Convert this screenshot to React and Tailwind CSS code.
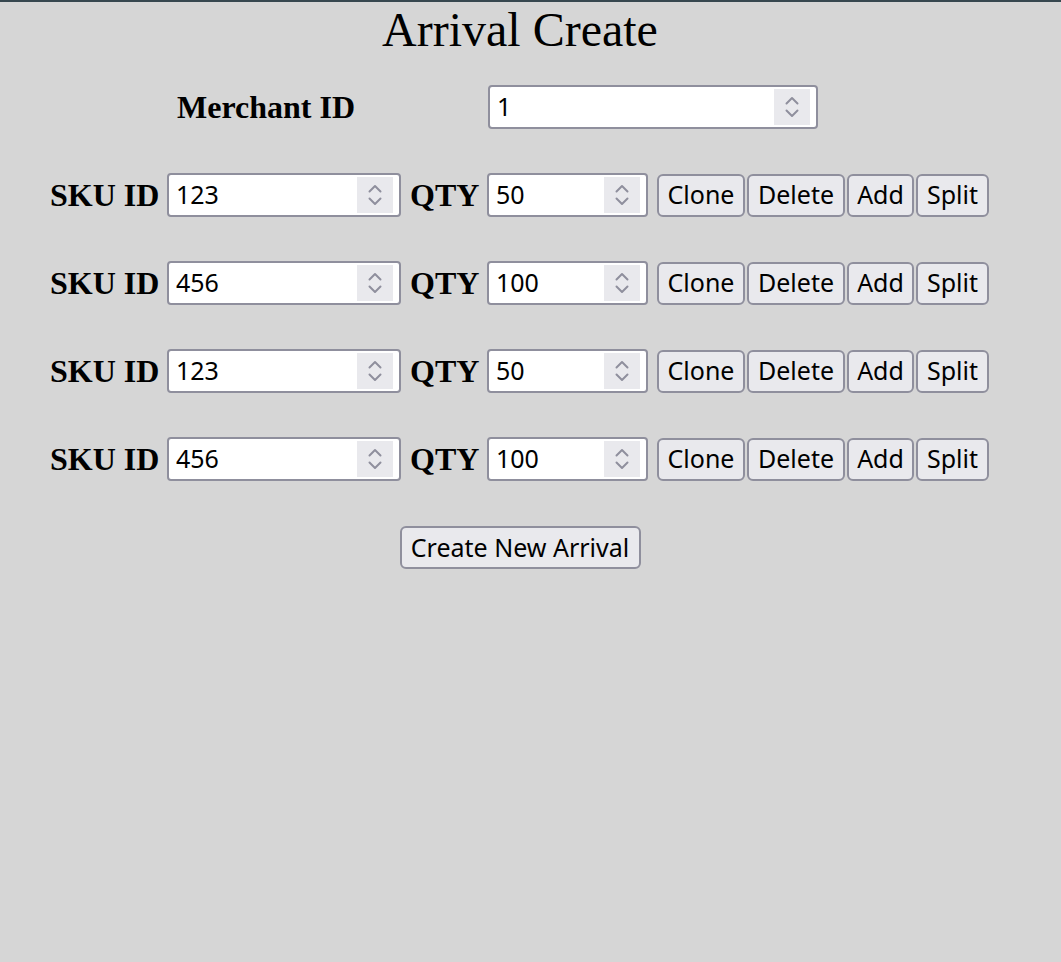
import React from 'react';

const rows = [
    { sku: '123', qty: '50' },
    { sku: '456', qty: '100' },
    { sku: '123', qty: '50' },
    { sku: '456', qty: '100' },
];

const Spinner = () => (
    <div className="w-[36px] h-[36px] shrink-0 bg-[#e9e9ed] flex items-center justify-center">
        <svg width="16" height="26" viewBox="0 0 16 26" fill="none" stroke="#8f8f9d" strokeWidth="2" strokeLinecap="round" strokeLinejoin="round">
            <path d="M2.5 9.5 L8 4 L13.5 9.5" />
            <path d="M2.5 16.5 L8 22 L13.5 16.5" />
        </svg>
    </div>
);

const NumberField = ({ value, width }) => (
    <div className={`${width} h-[44px] bg-white border-2 border-[#8f8f9d] rounded-[4px] flex items-center pl-[7px] pr-[6px]`}>
        <input
            type="text"
            defaultValue={value}
            className="flex-1 min-w-0 bg-transparent outline-none text-[25px] text-black"
            style={{ fontFamily: '"Noto Sans", sans-serif' }}
        />
        <Spinner />
    </div>
);

const Btn = ({ children, width }) => (
    <button
        className={`${width} h-[43px] bg-[#e9e9ed] border-2 border-[#8f8f9d] rounded-[6px] text-[25px] text-black flex items-center justify-center`}
        style={{ fontFamily: '"Noto Sans", sans-serif' }}
    >
        {children}
    </button>
);

const App = () => {
    return (
        <div className="min-h-[962px] bg-[#d6d6d6] border-t-2 border-[#37474f]" style={{ fontFamily: '"Liberation Serif", serif' }}>
            <div className="w-[1040px]">
                <h1 className="text-[48px] leading-[56px] text-center text-black">Arrival Create</h1>

                <div className="flex items-center pl-[177px] mt-[27px]">
                    <span className="text-[32px] leading-[44px] font-bold text-black">Merchant ID</span>
                    <div className="ml-[133px]">
                        <NumberField value="1" width="w-[330px]" />
                    </div>
                </div>

                <div className="flex flex-col gap-[44px] mt-[44px] pl-[50px]">
                    {rows.map((row, i) => (
                        <div key={i} className="flex items-center">
                            <span className="text-[32px] leading-[44px] font-bold text-black w-[117px]">SKU ID</span>
                            <NumberField value={row.sku} width="w-[234px]" />
                            <span className="text-[32px] leading-[44px] font-bold text-black ml-[9px] w-[77px]">QTY</span>
                            <NumberField value={row.qty} width="w-[161px]" />
                            <div className="flex gap-[2px] ml-[9px]">
                                <Btn width="w-[88px]">Clone</Btn>
                                <Btn width="w-[98px]">Delete</Btn>
                                <Btn width="w-[67px]">Add</Btn>
                                <Btn width="w-[73px]">Split</Btn>
                            </div>
                        </div>
                    ))}
                </div>

                <div className="flex justify-center mt-[45px]">
                    <Btn width="w-[241px]">Create New Arrival</Btn>
                </div>
            </div>
        </div>
    );
};

export default App;
